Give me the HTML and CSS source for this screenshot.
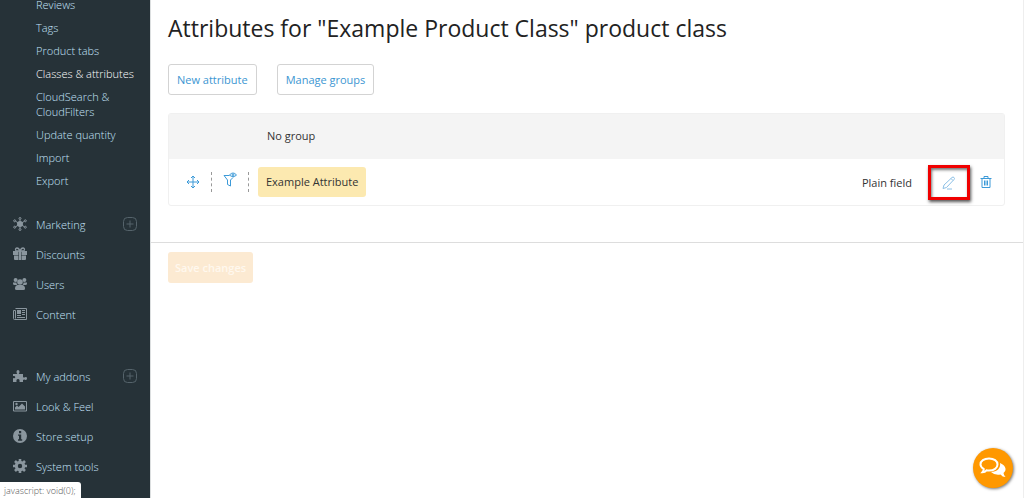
FILE: index.html
```html
<!DOCTYPE html>
<html lang="en">
<head>
<meta charset="utf-8">
<meta name="viewport" content="width=device-width, initial-scale=1.0">
<title>Attributes</title>
<link rel="stylesheet" href="styles.css">
</head>
<body>
<div class="page">
<nav class="sidebar">
<ul class="submenu">
<li><a href="#">Reviews</a></li>
<li><a href="#">Tags</a></li>
<li><a href="#">Product tabs</a></li>
<li><a href="#" class="active">Classes &amp; attributes</a></li>
<li><a href="#">CloudSearch &amp; CloudFilters</a></li>
<li><a href="#">Update quantity</a></li>
<li><a href="#">Import</a></li>
<li><a href="#">Export</a></li>
</ul>
<ul class="menu">
<li>
<a href="#"><svg class="icon" viewBox="0 0 14 14"><g stroke="currentColor" fill="none"><path d="M7 7V3M7 7v4M7 7L3 4.500M7 7l4-2.500M7 7L3 9.500M7 7l4 2.500"/><circle cx="7" cy="1.500" r="1"/><circle cx="7" cy="12.500" r="1"/><circle cx="1.700" cy="3.800" r="1"/><circle cx="12.300" cy="3.800" r="1"/><circle cx="1.700" cy="10.200" r="1"/><circle cx="12.300" cy="10.200" r="1"/></g><circle cx="7" cy="7" r="3" fill="currentColor"/></svg>Marketing</a>
<button class="expand" type="button" aria-label="Expand Marketing"><svg viewBox="0 0 14 14"><rect x=".5" y=".5" width="13" height="13" rx="4"/><path d="M3.500 7h7M7 3.500v7"/></svg></button>
</li>
<li><a href="#"><svg class="icon" viewBox="0 0 14 14"><path fill="currentColor" d="M0 4h5.500v4H0zM8.500 4H14v4H8.500zM1 8.500h4.500V13H2q-1 0-1-1zM8.500 8.500H13V12q0 1-1 1H8.500zM6 4h2v9H6z"/><path fill="none" stroke="currentColor" stroke-width="1.300" d="M7 4C6 1.500 5 1 4 1 2 1 2 4 4 4h6c2 0 2-3 0-3C9 1 8 1.500 7 4"/></svg>Discounts</a></li>
<li><a href="#"><svg class="icon" viewBox="0 0 14 14" fill="currentColor"><circle cx="2.600" cy="3" r="2"/><circle cx="11.400" cy="3" r="2"/><path d="M0 5.500h3.500Q3.500 7 4.500 8H1.500Q0 8 0 6.500zM14 5.500h-3.500q0 1.500-1 2.500h3q1.500 0 1.500-1.500z"/><circle cx="7" cy="5" r="2.800"/><path d="M4.500 8h5q2.500.5 2.500 3.500Q12 13 10.500 13h-7Q2 13 2 11.500 2 8.500 4.500 8z"/></svg>Users</a></li>
<li><a href="#"><svg class="icon" viewBox="0 0 14 14"><path fill="none" stroke="currentColor" d="M2.500 1.500h11v11h-12q-1 0-1-1v-8h2v8"/><path fill="currentColor" d="M4 3h4v4H4zM9 3h3v1H9zM9 5h3v1H9zM9 7h3v1H9zM4 8h4v1H4zM4 10h8v1H4z"/></svg>Content</a></li>
</ul>
<ul class="menu">
<li>
<a href="#"><svg class="icon" viewBox="0 0 14 14"><path fill="currentColor" d="M0 5h4.300Q3.500 4 3.500 2.500 3.600 1 5 1t1.500 1.500Q6.500 4 5.700 5H10v3q1 1 2 .2 2-.7 2 1.300t-2 1.300q-1-.8-2 .2v2H6.500q.5-3-1.500-3t-1.500 3H0V9q2 1 2.300-.7Q2.300 6.500 0 7z"/></svg>My addons</a>
<button class="expand" type="button" aria-label="Expand My addons"><svg viewBox="0 0 14 14"><rect x=".5" y=".5" width="13" height="13" rx="4"/><path d="M3.500 7h7M7 3.500v7"/></svg></button>
</li>
<li><a href="#"><svg class="icon" viewBox="0 0 14 14"><path fill="none" stroke="currentColor" d="M.5 2.500h13v9.500H.5z"/><circle cx="3.500" cy="5" r="1.200" fill="currentColor"/><path fill="currentColor" d="M2 10.500v-2l2-2 1.500 1.500L9 4.500l3 3v3z"/></svg>Look &amp; Feel</a></li>
<li><a href="#"><svg class="icon" viewBox="0 0 14 14"><path fill="currentColor" fill-rule="evenodd" d="M7 0a7 7 0 1 1 0 14A7 7 0 0 1 7 0zM6 2v2.200h2.200V2zM5 5.500v1.300h1v3.400H5v1.500h4.200v-1.500h-1V5.500z"/></svg>Store setup</a></li>
<li><a href="#"><svg class="icon" viewBox="0 0 14 14"><circle cx="7" cy="7" r="3.700" fill="none" stroke="currentColor" stroke-width="3"/><path stroke="currentColor" stroke-width="2.600" d="M7 0v3M7 11v3M0 7h3M11 7h3M2 2l2 2M10 10l2 2M2 12l2-2M10 4l2-2"/></svg>System tools</a></li>
</ul>
</nav>
<main class="content">
<h1>Attributes for "Example Product Class" product class</h1>
<div class="toolbar">
<button class="btn" type="button">New attribute</button>
<button class="btn" type="button">Manage groups</button>
</div>
<section class="attributes">
<h2 class="group">No group</h2>
<div class="attribute">
<button class="action move" type="button" aria-label="Move"><svg width="14" height="14" viewBox="0 0 14 14"><path d="M7 1v12M1 7h12M5 3l2-2 2 2M5 11l2 2 2-2M3 5L1 7l2 2M11 5l2 2-2 2"/></svg></button>
<button class="action filter" type="button" aria-label="Filter visibility"><svg width="14" height="16" viewBox="0 0 14 16"><path d="M6.500 3.500H1L4.500 8v4.500l3 1.500V8L10 5.500"/><path d="M6.500 3q3.500-4 7 0-3.500 3.500-7 0z"/><circle cx="10" cy="3" r="1"/></svg></button>
<span class="name">Example Attribute</span>
<span class="type">Plain field</span>
<button class="action edit" type="button" aria-label="Edit"><svg width="14" height="14" viewBox="0 0 14 14"><path d="M1 12.500l1-3.500L10 1.500q1-1 2 0t0 2L4.500 11.500zM9 2.500L11 4.500M5 13h5"/></svg></button>
<button class="action remove" type="button" aria-label="Delete"><svg width="12" height="12" viewBox="0 0 12 12"><path d="M.5 2.500h11M4 2.500v-2h4v2M2 2.500v9h8v-9M4.500 4.500v5M6 4.500v5M7.500 4.500v5"/></svg></button>
</div>
</section>
<footer class="sticky">
<button class="save" type="button" disabled>Save changes</button>
</footer>
</main>
</div>
<button class="chat" type="button" aria-label="Chat"><svg width="28" height="24" viewBox="0 0 28 24"><path fill="#fff" d="M21 7c7 3 6.500 8 3.500 10q.3 2.500 2 4-3 0-5-2.500-6 1-9.500-2.500C18 16 22 12 21 7z"/><path fill="#ff9800" stroke="#fff" stroke-width="2" d="M10 2.500c5 0 8.500 2.500 8.500 6s-3.500 6-8.500 6q-1.500 0-2.500-.2-1.500 1.900-4 1.900 1.300-1.500 1.300-3.200Q1.500 11 1.500 8.500c0-3.500 3.500-6 8.500-6z"/></svg></button>
<div class="status">javascript: void(0);</div>
</body>
</html>
```
FILE: styles.css
```css
* { box-sizing: border-box; }
body {
  margin: 0;
  font: 11px/15px "Open Sans", sans-serif;
  color: #333;
  background: #fff;
}
a { text-decoration: none; }
button {
  font: inherit;
  margin: 0;
  padding: 0;
  border: 0;
  background: none;
  cursor: pointer;
}
svg { display: block; }
ul {
  list-style: none;
  margin: 0;
  padding: 0;
}
.page {
  display: grid;
  grid-template-columns: 150px 1fr;
  min-height: 100vh;
}

/* sidebar */
.sidebar {
  background: #263238;
  overflow: hidden;
  font-weight: 300;
}
.sidebar a { color: #c4e2f8; }
.sidebar a.active { color: #fff; }
.submenu {
  display: grid;
  gap: 8px;
  margin-top: -3px;
  padding: 0 12px 0 36px;
}
.menu { padding-top: 21px; }
.menu + .menu { padding-top: 32px; }
.menu li {
  display: flex;
  align-items: center;
  justify-content: space-between;
  height: 30px;
  padding: 0 13px;
}
.menu a {
  display: flex;
  align-items: center;
  gap: 9px;
}
.icon {
  width: 14px;
  height: 14px;
  color: #8a969e;
}
.expand svg {
  width: 14px;
  height: 14px;
  fill: none;
  stroke: #55636b;
}

/* main area */
.content {
  border-left: 1px solid #dcdfe0;
  border-right: 1px solid #eee;
}
h1 {
  margin: 0;
  padding: 12px 17px 20px;
  font-size: 23px;
  line-height: 32px;
  font-weight: 400;
  color: #222;
}
.toolbar {
  display: flex;
  gap: 20px;
  padding: 0 17px;
}
.btn {
  height: 31px;
  padding: 0 8px;
  border: 1px solid #d3d3d3;
  border-radius: 3px;
  color: #3c96d2;
}
.attributes {
  margin: 18px 18px 36px 17px;
  border: 1px solid #f0f0f0;
  border-radius: 3px;
}
.group {
  margin: 0;
  padding: 14px 98px 16px;
  background: #f4f4f4;
  font-size: 11px;
  line-height: 15px;
  font-weight: 400;
}
.attribute {
  display: flex;
  align-items: center;
  height: 46px;
}
.action svg {
  fill: none;
  stroke: #3c9ad8;
}
.move { padding: 0 11px 0 17px; }
.filter {
  height: 20px;
  padding: 0 11px 4px;
  border: dashed #999;
  border-width: 0 1px;
}
.name {
  margin-left: 9px;
  padding: 7px 8px 8px;
  border-radius: 3px;
  background: #fce9b0;
}
.type { margin-left: auto; }
.edit {
  margin: 0 10px 0 16px;
  padding: 8px 11px 7px;
  border: 3px solid #f00000;
  box-shadow: 1px 2px 3px #555, inset 1px 2px 3px #777;
}
.edit svg { stroke: #8cc0e6; }
.remove { padding-right: 12px; }
.sticky {
  border-top: 1px solid #ddd;
  padding: 9px 18px 9px 17px;
}
.save {
  height: 31px;
  padding: 0 7px;
  border-radius: 3px;
  background: #fcead2;
  color: #fff8ee;
  font-weight: 600;
}
.chat {
  position: fixed;
  right: 11px;
  bottom: 10px;
  display: grid;
  place-items: center;
  width: 40px;
  height: 40px;
  border-radius: 50%;
  background: #ff9800;
  box-shadow: 1px 1px 3px #777;
}
.status {
  position: fixed;
  left: 0;
  bottom: 0;
  padding: 1px 5px 0 4px;
  border-radius: 0 3px 0 0;
  background: #fff;
  color: #555;
  font-size: 9px;
  font-weight: 300;
}
```
